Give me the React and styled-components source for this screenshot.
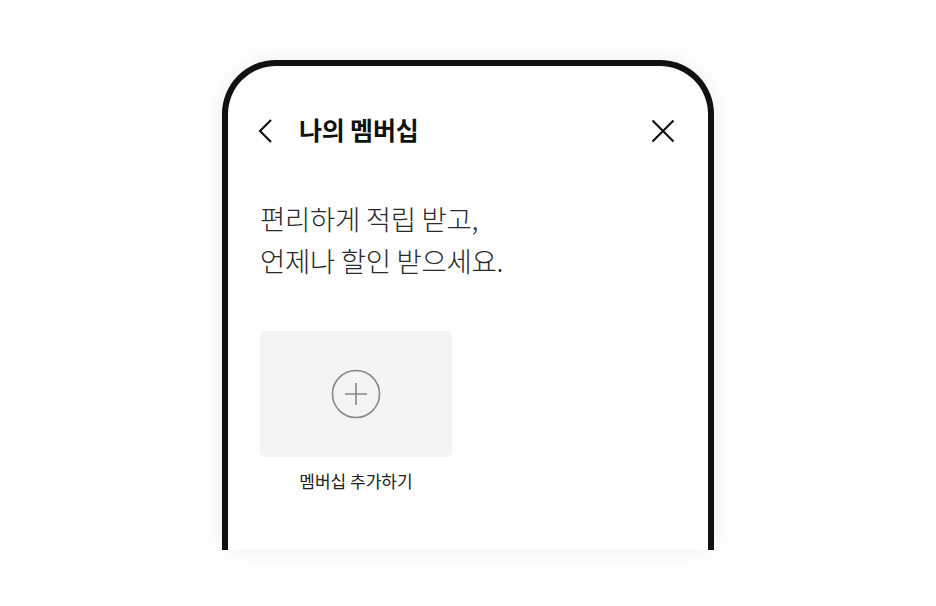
import styled, { createGlobalStyle } from "styled-components";

const GlobalStyle = createGlobalStyle`
  html, body {
    margin: 0;
    padding: 0;
    background: #ffffff;
    font-family: "Noto Sans CJK KR", "Noto Sans", sans-serif;
  }
`;

const Page = styled.div`
  display: flex;
  justify-content: center;
  padding-top: 60px;
  height: 546px;
  overflow: hidden;
`;

const PhoneFrame = styled.div`
  width: 492px;
  height: 490px;
  border: 6px solid #111111;
  border-bottom: none;
  border-radius: 54px 54px 0 0;
  box-shadow: 0 0 28px rgba(0, 0, 0, 0.07);
  background: #ffffff;
  display: flex;
  flex-direction: column;
  padding: 0 33px 0 29px;
  box-sizing: border-box;
`;

const Header = styled.div`
  display: flex;
  align-items: center;
  height: 44px;
  margin-top: 43px;
`;

const IconButton = styled.button`
  border: none;
  background: none;
  padding: 0;
  display: flex;
  align-items: center;
  justify-content: center;
  cursor: pointer;
  margin-left: ${props => props.$push ? "auto" : "0"};
`;

const Title = styled.h1`
  margin: 0 0 4px 26px;
  font-size: 25px;
  font-weight: 700;
  color: #111111;
  letter-spacing: -0.2px;
`;

const Intro = styled.p`
  margin: 44px 0 0 3px;
  font-size: 27.5px;
  font-weight: 300;
  line-height: 42px;
  color: #2a2a2a;
  letter-spacing: -0.3px;
`;

const CardList = styled.div`
  display: flex;
  margin-top: 50px;
  margin-left: 3px;
`;

const AddItem = styled.div`
  display: flex;
  flex-direction: column;
  align-items: center;
  width: 192px;
`;

const AddCard = styled.div`
  width: 192px;
  height: 126px;
  border-radius: 6px;
  background: #f4f4f4;
  display: flex;
  align-items: center;
  justify-content: center;
`;

const AddLabel = styled.span`
  margin-top: 11px;
  font-size: 17px;
  color: #222222;
  letter-spacing: 0;
`;

const ChevronLeft = () => (
  <svg width="16" height="24" viewBox="0 0 16 24" fill="none">
    <path d="M14 1 L3 12 L14 23" stroke="#111" strokeWidth="2.2" />
  </svg>
);

const CloseIcon = () => (
  <svg width="24" height="24" viewBox="0 0 24 24" fill="none">
    <path d="M1.5 1.5 L22.5 22.5 M22.5 1.5 L1.5 22.5" stroke="#111" strokeWidth="2.2" />
  </svg>
);

const PlusCircle = () => (
  <svg width="50" height="50" viewBox="0 0 50 50" fill="none">
    <circle cx="25" cy="25" r="23.5" stroke="#888" strokeWidth="1.6" />
    <path d="M25 14 V36 M14 25 H36" stroke="#888" strokeWidth="1.6" />
  </svg>
);

const App = () => {
  return (
    <>
      <GlobalStyle />
      <Page>
        <PhoneFrame>
          <Header>
            <IconButton aria-label="back"><ChevronLeft /></IconButton>
            <Title>나의 멤버십</Title>
            <IconButton $push aria-label="close"><CloseIcon /></IconButton>
          </Header>
          <Intro>
            편리하게 적립 받고,<br />
            언제나 할인 받으세요.
          </Intro>
          <CardList>
            <AddItem>
              <AddCard><PlusCircle /></AddCard>
              <AddLabel>멤버십 추가하기</AddLabel>
            </AddItem>
          </CardList>
        </PhoneFrame>
      </Page>
    </>
  );
};

export default App;
